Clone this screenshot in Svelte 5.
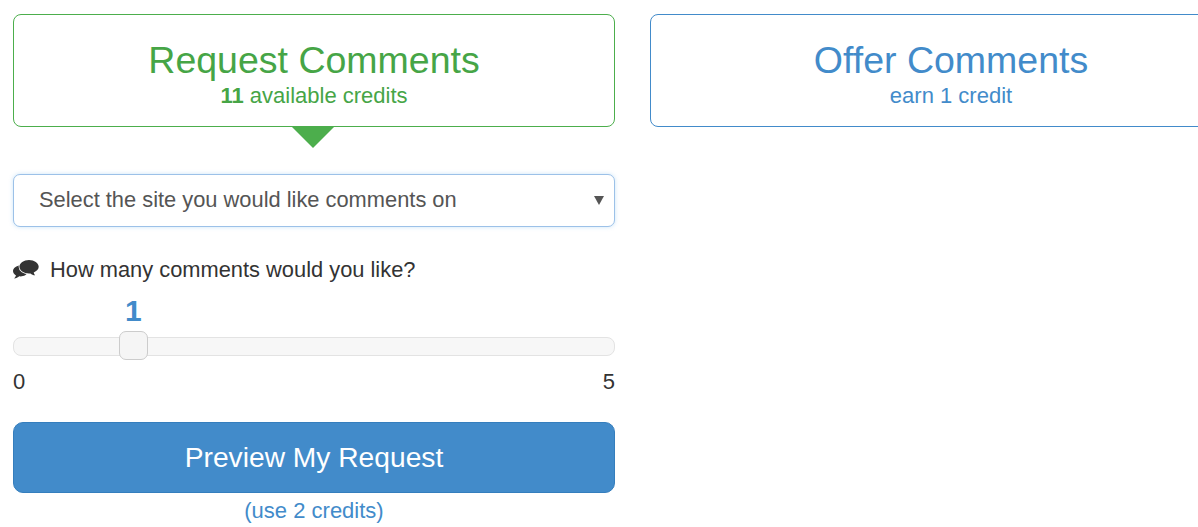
<script>
  const sites = ["Select the site you would like comments on"];
</script>

<div class="page">
  <section class="column">
    <div class="tab request">
      <div class="tab-title">Request Comments</div>
      <div class="tab-sub"><strong>11</strong> available credits</div>
      <span class="pointer"></span>
    </div>

    <div class="select-wrap">
      <select class="site-select">
        {#each sites as site}
          <option>{site}</option>
        {/each}
      </select>
      <span class="caret"></span>
    </div>

    <div class="question">
      <svg class="chat-icon" viewBox="0 0 26 20" width="26" height="20" aria-hidden="true">
        <path fill="#333" d="M7.5 5.5C3.4 5.5 0 8 0 11c0 1.8 1.2 3.4 3 4.4-.3 1-.9 2-1.9 3 2 0 3.9-.9 5.2-2.1.4 0 .8.1 1.2.1 3.5 0 6.5-1.8 7.3-4.4L7.5 5.5z"/>
        <path class="big-bubble" fill="#333" stroke="#fff" stroke-width="1.6" d="M16 0c-5.2 0-9.6 3-9.6 6.8 0 3.7 4.4 6.7 9.6 6.7.5 0 1 0 1.5-.1 1.1 1 2.8 1.8 4.6 1.9-.7-.8-1.2-1.8-1.4-2.9 3-1.2 5-3.3 5-5.6C25.7 3 21.2 0 16 0z"/>
      </svg>
      <span>How many comments would you like?</span>
    </div>

    <div class="slider-block">
      <div class="slider-value"><span>1</span></div>
      <div class="track"><span class="handle"></span></div>
      <div class="scale"><span>0</span><span>5</span></div>
    </div>

    <button class="preview" type="button">Preview My Request</button>
    <div class="cost">(use 2 credits)</div>
  </section>

  <section class="column">
    <div class="tab offer">
      <div class="tab-title">Offer Comments</div>
      <div class="tab-sub">earn 1 credit</div>
    </div>
  </section>
</div>

<style>
  :global(body) {
    margin: 0;
    background: #fff;
    overflow: hidden;
  }

  .page {
    display: grid;
    grid-template-columns: 602px 602px;
    column-gap: 35px;
    width: 1239px;
    height: 527px;
    padding: 14px 0 0 13px;
    box-sizing: border-box;
    overflow: hidden;
    font-family: "Liberation Sans", Arial, sans-serif;
    color: #333;
  }

  .column {
    display: flex;
    flex-direction: column;
    min-width: 0;
  }

  .tab {
    position: relative;
    height: 113px;
    box-sizing: border-box;
    border: 1px solid;
    border-radius: 8px;
    padding-top: 25px;
    text-align: center;
    background: #fff;
  }

  .request {
    border-color: #4cae4c;
    color: #46a546;
  }

  .offer {
    border-color: #428bca;
    color: #428bca;
  }

  .tab-title {
    font-size: 37.5px;
    line-height: 40px;
  }

  .tab-sub {
    font-size: 22px;
    line-height: 30px;
    margin-top: 1px;
  }

  .pointer {
    position: absolute;
    left: 50%;
    top: 100%;
    margin-left: -23px;
    width: 0;
    height: 0;
    border-left: 22px solid transparent;
    border-right: 22px solid transparent;
    border-top: 22px solid #4cae4c;
  }

  .select-wrap {
    position: relative;
    margin-top: 47px;
    height: 53px;
  }

  .site-select {
    display: block;
    width: 100%;
    height: 53px;
    box-sizing: border-box;
    appearance: none;
    background: #fff;
    border: 1px solid #9cc1e8;
    border-radius: 7px;
    box-shadow: 0 0 4px rgba(102, 175, 233, 0.35);
    padding: 0 40px 2px 25px;
    font: 21.85px "Liberation Sans", Arial, sans-serif;
    color: #555;
    outline: none;
  }

  .caret {
    position: absolute;
    right: 11px;
    top: 22px;
    width: 0;
    height: 0;
    border-left: 5px solid transparent;
    border-right: 5px solid transparent;
    border-top: 9px solid #555;
    pointer-events: none;
  }

  .question {
    display: flex;
    align-items: center;
    gap: 11px;
    margin-top: 29px;
    height: 28px;
    font-size: 21.85px;
    line-height: 28px;
  }

  .chat-icon {
    flex: none;
    overflow: visible;
  }

  .big-bubble {
    paint-order: stroke;
  }

  .slider-block {
    margin-top: 14px;
  }

  .slider-value {
    display: flex;
    height: 36px;
    padding-left: 112px;
    font-size: 30px;
    font-weight: 700;
    line-height: 26px;
    color: #428bca;
  }

  .track {
    position: relative;
    height: 19px;
    box-sizing: border-box;
    margin-top: 3px;
    background: #f7f7f7;
    border: 1px solid #e3e3e3;
    border-radius: 8px;
  }

  .handle {
    position: absolute;
    left: 105px;
    top: -7px;
    width: 29px;
    height: 29px;
    box-sizing: border-box;
    background: #f5f5f5;
    border: 1px solid #ccc;
    border-radius: 7px;
  }

  .scale {
    display: flex;
    justify-content: space-between;
    margin-top: 12px;
    font-size: 22px;
    line-height: 28px;
  }

  .preview {
    display: block;
    width: 100%;
    height: 71px;
    margin-top: 26px;
    background: #428bca;
    border: 1px solid #357ebd;
    border-radius: 10px;
    color: #fff;
    font: 28.2px "Liberation Sans", Arial, sans-serif;
  }

  .cost {
    margin-top: 4px;
    text-align: center;
    font-size: 22px;
    line-height: 28px;
    color: #428bca;
  }
</style>
